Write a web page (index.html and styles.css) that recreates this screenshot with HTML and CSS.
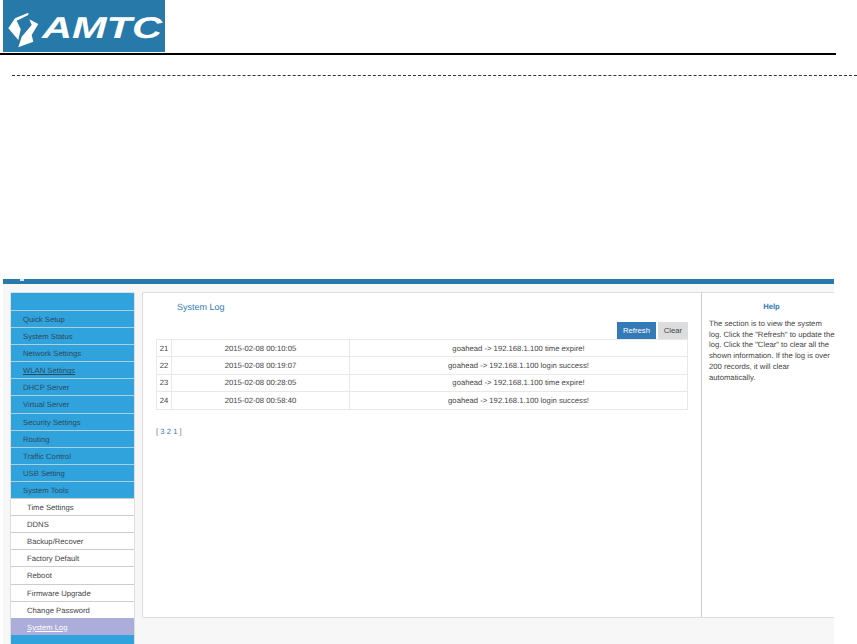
FILE: index.html
```html
<!DOCTYPE html>
<html>

<head>
    <title>System Log</title>
    <link rel="stylesheet" href="styles.css">
</head>

<body>
    <div class="doc-header">
        <div class="logo">
            <svg width="162" height="52" viewBox="0 0 162 52">
                <path fill="#fff" d="M25.3 12.7 L12 18.3 L5.3 28.3 L15.3 40 L17.7 29.3 L13.7 20.7 L25.3 15 Z" />
                <path fill="#fff" d="M26.3 19.3 L35.3 24 L28.7 35 L30.3 41.7 L15.3 47.3 L18.7 36.7 L28.7 25 Z" />
                <text class="logo-text" x="39" y="38" textLength="120" lengthAdjust="spacingAndGlyphs">AMTC</text>
            </svg>
        </div>
    </div>
    <div class="dash-line"></div>

    <div class="shot">
        <div class="top-bar"><span class="top-mark"></span></div>
        <div class="page">
            <div class="sidebar">
                <div class="side-head"></div>
                <a class="menu-item">Quick Setup</a>
                <a class="menu-item">System Status</a>
                <a class="menu-item">Network Settings</a>
                <a class="menu-item underline">WLAN Settings</a>
                <a class="menu-item">DHCP Server</a>
                <a class="menu-item">Virtual Server</a>
                <a class="menu-item">Security Settings</a>
                <a class="menu-item">Routing</a>
                <a class="menu-item">Traffic Control</a>
                <a class="menu-item">USB Setting</a>
                <a class="menu-item">System Tools</a>
                <a class="sub-item">Time Settings</a>
                <a class="sub-item">DDNS</a>
                <a class="sub-item">Backup/Recover</a>
                <a class="sub-item">Factory Default</a>
                <a class="sub-item">Reboot</a>
                <a class="sub-item">Firmware Upgrade</a>
                <a class="sub-item">Change Password</a>
                <a class="sub-item active">System Log</a>
            </div>

            <div class="panel">
                <div class="main">
                    <h2>System Log</h2>
                    <div class="buttons">
                        <button class="btn-blue">Refresh</button>
                        <button class="btn-gray">Clear</button>
                    </div>
                    <table class="log">
                        <tr>
                            <td class="col-id">21</td>
                            <td class="col-time">2015-02-08 00:10:05</td>
                            <td>goahead -&gt; 192.168.1.100 time expire!</td>
                        </tr>
                        <tr>
                            <td class="col-id">22</td>
                            <td class="col-time">2015-02-08 00:19:07</td>
                            <td>goahead -&gt; 192.168.1.100 login success!</td>
                        </tr>
                        <tr>
                            <td class="col-id">23</td>
                            <td class="col-time">2015-02-08 00:28:05</td>
                            <td>goahead -&gt; 192.168.1.100 time expire!</td>
                        </tr>
                        <tr>
                            <td class="col-id">24</td>
                            <td class="col-time">2015-02-08 00:58:40</td>
                            <td>goahead -&gt; 192.168.1.100 login success!</td>
                        </tr>
                    </table>
                    <div class="pager">[ <a>3</a> <a>2</a> <a>1</a> ]</div>
                </div>
                <div class="help">
                    <h3>Help</h3>
                    <p>The section is to view the system<br>
                    log. Click the "Refresh" to update the<br>
                    log. Click the "Clear" to clear all the<br>
                    shown information. If the log is over<br>
                    200 records, it will clear<br>
                    automatically.</p>
                </div>
            </div>
        </div>
    </div>
</body>

</html>
```

FILE: styles.css
```css
body {
    margin: 0;
    background-color: #fff;
    font-family: "Liberation Sans", Arial, sans-serif;
    font-size: 7.7px;
    color: #444;
    text-rendering: geometricPrecision;
    overflow: hidden;
}

.doc-header {
    width: 836px;
    height: 53px;
    border-bottom: 2px solid #000;
}

.logo {
    margin-left: 3px;
    width: 162px;
    height: 52px;
    background-color: #2679a9;
}

.logo svg {
    display: block;
}

.logo-text {
    font-family: "Liberation Sans", Arial, sans-serif;
    font-size: 30px;
    font-weight: bold;
    font-style: italic;
    fill: #fff;
}

.dash-line {
    margin: 20px 0 0 12px;
    border-top: 1px dashed #333;
}

.shot {
    margin: 203px 0 0 3px;
    width: 831px;
}

.top-bar {
    height: 5px;
    background-color: #2679a9;
}

.top-mark {
    display: block;
    width: 4px;
    height: 2px;
    margin-left: 17px;
    background-color: #d5e6f0;
}

.page {
    display: flex;
    gap: 7px;
    height: 360px;
    padding: 8px 0 0 7px;
    box-sizing: border-box;
    background-color: #f7f7f7;
}

/* left menu */
.sidebar {
    width: 125px;
    flex-shrink: 0;
    box-sizing: border-box;
    background-color: #31a3dc;
    border: 1px solid #ddd;
    border-bottom: none;
    border-radius: 2px 2px 0 0;
}

.side-head {
    height: 17px;
}

.menu-item,
.sub-item {
    display: block;
    height: 17.1px;
    line-height: 17px;
    box-sizing: border-box;
    border-top: 1px solid #a9cfe4;
    padding-left: 12px;
    color: #2a4a60;
}

.sub-item {
    padding-left: 16px;
    background-color: #fff;
    border-top-color: #ccc;
    color: #444;
}

.sub-item.active {
    background-color: #adaddb;
    border-top-color: #adaddb;
    color: #fff;
    text-decoration: underline;
}

.underline {
    text-decoration: underline;
}

/* main panel */
.panel {
    flex: 1;
    display: flex;
    height: 326px;
    box-sizing: border-box;
    background-color: #fff;
    border: 1px solid #ddd;
    border-right: none;
    border-radius: 2px 0 0 2px;
}

.main {
    flex: 1;
    padding: 0 13px;
}

h2 {
    margin: 8px 0 0 21px;
    font-size: 9px;
    line-height: 12px;
    font-weight: normal;
    color: #337ab7;
}

.buttons {
    display: flex;
    justify-content: flex-end;
    gap: 2px;
    margin-top: 9px;
}

button {
    height: 17px;
    padding: 0;
    border: none;
    font-family: inherit;
    font-size: 7.7px;
}

.btn-blue {
    width: 39px;
    background-color: #337ab7;
    color: #fff;
}

.btn-gray {
    width: 30px;
    background-color: #ddd;
    color: #444;
}

.log {
    width: 100%;
    border-collapse: collapse;
}

.log td {
    height: 16.4px;
    padding: 0;
    border: 1px solid #e8e8e8;
    text-align: center;
}

.log .col-id {
    width: 14px;
}

.log .col-time {
    width: 177px;
}

.pager {
    margin-top: 17px;
    color: #6a7d8c;
}

.pager a {
    color: #337ab7;
}

.help {
    width: 133px;
    flex-shrink: 0;
    box-sizing: border-box;
    padding: 0 0 0 7px;
    border-left: 1px solid #ccc;
}

h3 {
    margin: 9px 0 0;
    font-size: 7.7px;
    line-height: 10px;
    text-align: center;
    color: #337ab7;
}

.help p {
    margin: 7px 0 0;
    line-height: 10.7px;
    white-space: nowrap;
}
```
